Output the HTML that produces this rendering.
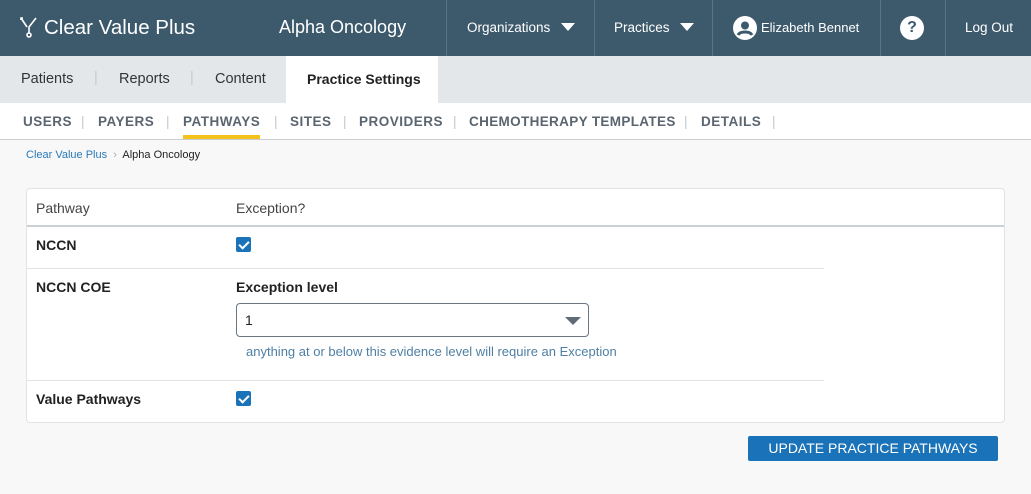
<!DOCTYPE html>
<html><head><meta charset="utf-8"><style>
*{box-sizing:border-box;margin:0;padding:0}
body{width:1031px;height:494px;overflow:hidden;background:#f8f8f8;font-family:"Liberation Sans",sans-serif;color:#222;position:relative}
.hdr{position:absolute;left:0;top:0;width:1031px;height:56px;background:#3d5a6c;color:#fff}
.abs{position:absolute}
.vd{position:absolute;top:0;width:1px;height:56px;background:#5a7487}
.tabs{position:absolute;top:56px;left:0;width:1031px;height:47px;background:#e4e7ea;font-size:14.5px;color:#333}
.sub{position:absolute;top:103px;left:0;width:1031px;height:37px;background:#fff;border-bottom:1px solid #c9cdd1;font-size:13.5px;font-weight:bold;color:#5a6570;letter-spacing:.5px}
.sub .abs{top:11px}
.sep{color:#c3c9cf;font-weight:normal}
.card{position:absolute;left:26px;top:188px;width:979px;height:235px;background:#fff;border:1px solid #e3e3e3;border-radius:4px}
.cb{position:absolute;width:15px;height:15px;background:#1a73b8;border-radius:2px}
.cb:after{content:"";position:absolute;left:5px;top:2px;width:4px;height:8px;border:solid #fff;border-width:0 2px 2px 0;transform:rotate(45deg)}
.t{position:absolute;font-size:14px}
.b{font-weight:bold}
</style></head><body>
<div class="hdr">
 <svg class="abs" style="left:19px;top:16px" width="20" height="22" viewBox="0 0 20 22" fill="none" stroke="#fff" stroke-width="1.6"><path d="M2 2l6 9M4 2H2v2M17 2l-7 9v6"/><circle cx="10" cy="19" r="2"/></svg>
 <div class="abs" style="left:44px;top:16px;font-size:20.5px">Clear Value Plus</div>
 <div class="abs" style="left:279px;top:17px;font-size:18px">Alpha Oncology</div>
 <div class="vd" style="left:446px"></div><div class="vd" style="left:594px"></div><div class="vd" style="left:712px"></div><div class="vd" style="left:880px"></div><div class="vd" style="left:945px"></div>
 <div class="abs" style="left:467px;top:20px;font-size:13.5px">Organizations</div>
 <div class="abs" style="left:561px;top:23px;border-left:7px solid transparent;border-right:7px solid transparent;border-top:8px solid #fff"></div>
 <div class="abs" style="left:614px;top:20px;font-size:13.5px">Practices</div>
 <div class="abs" style="left:680px;top:23px;border-left:7px solid transparent;border-right:7px solid transparent;border-top:8px solid #fff"></div>
 <svg class="abs" style="left:733px;top:16px" width="24" height="24" viewBox="0 0 24 24"><circle cx="12" cy="12" r="12" fill="#fff"/><circle cx="12" cy="9.5" r="4" fill="#3d5a6c"/><path d="M5 19c2-4 12-4 14 0" stroke="#3d5a6c" stroke-width="3" fill="none"/></svg>
 <div class="abs" style="left:761px;top:20px;font-size:13px">Elizabeth Bennet</div>
 <div class="abs" style="left:900px;top:16px;width:24px;height:24px;border-radius:50%;background:#fff;color:#3d5a6c;font-weight:bold;font-size:16px;text-align:center;line-height:24px">?</div>
 <div class="abs" style="left:965px;top:20px;font-size:13.5px">Log Out</div>
</div>
<div class="tabs">
 <div class="abs" style="left:21px;top:15px">Patients</div>
 <div class="abs sep" style="left:94px;top:14px">|</div>
 <div class="abs" style="left:119px;top:15px">Reports</div>
 <div class="abs sep" style="left:190px;top:14px">|</div>
 <div class="abs" style="left:215px;top:15px">Content</div>
 <div class="abs" style="left:286px;top:0;width:152px;height:47px;background:#fff"></div>
 <div class="abs" style="left:307px;top:15px;font-weight:bold;color:#222;font-size:14px">Practice Settings</div>
</div>
<div class="sub">
 <div class="abs" style="left:23px">USERS</div><div class="abs sep" style="left:81px">|</div>
 <div class="abs" style="left:98px">PAYERS</div><div class="abs sep" style="left:166px">|</div>
 <div class="abs" style="left:183px">PATHWAYS</div><div class="abs sep" style="left:274px">|</div>
 <div class="abs" style="left:290px">SITES</div><div class="abs sep" style="left:343px">|</div>
 <div class="abs" style="left:359px">PROVIDERS</div><div class="abs sep" style="left:453px">|</div>
 <div class="abs" style="left:469px;letter-spacing:.35px">CHEMOTHERAPY TEMPLATES</div><div class="abs sep" style="left:684px">|</div>
 <div class="abs" style="left:701px">DETAILS</div><div class="abs sep" style="left:772px">|</div>
 <div class="abs" style="left:183px;top:32px;width:77px;height:4px;background:#f4c21b"></div>
</div>
<div class="abs" style="left:26px;top:149px;font-size:11px;color:#2a7ab8">Clear Value Plus <span style="color:#aaa">&nbsp;›&nbsp;</span> <span style="color:#222">Alpha Oncology</span></div>
<div class="card">
 <div class="t" style="left:9px;top:11px;color:#444">Pathway</div>
 <div class="t" style="left:209px;top:11px;color:#444">Exception?</div>
 <div class="abs" style="left:0;top:36px;width:977px;height:2px;background:#c9d0d6"></div>
 <div class="t b" style="left:9px;top:48px">NCCN</div>
 <div class="cb" style="left:209px;top:48px"></div>
 <div class="abs" style="left:0;top:79px;width:797px;height:1px;background:#e3e3e3"></div>
 <div class="t b" style="left:9px;top:90px">NCCN COE</div>
 <div class="t b" style="left:209px;top:90px">Exception level</div>
 <div class="abs" style="left:209px;top:114px;width:353px;height:34px;border:1px solid #6b7680;border-radius:4px"></div>
 <div class="t" style="left:218px;top:123px">1</div>
 <div class="abs" style="left:538px;top:128px;border-left:8px solid transparent;border-right:8px solid transparent;border-top:8px solid #5f6b76"></div>
 <div class="t" style="left:219px;top:155px;font-size:13px;color:#4f7fa4">anything at or below this evidence level will require an Exception</div>
 <div class="abs" style="left:0;top:191px;width:797px;height:1px;background:#e3e3e3"></div>
 <div class="t b" style="left:9px;top:202px">Value Pathways</div>
 <div class="cb" style="left:209px;top:202px"></div>
</div>
<div class="abs" style="left:748px;top:436px;width:250px;height:25px;background:#1a73b8;border-radius:2px;color:#fff;font-size:14px;text-align:center;line-height:25px">UPDATE PRACTICE PATHWAYS</div>
</body></html>
